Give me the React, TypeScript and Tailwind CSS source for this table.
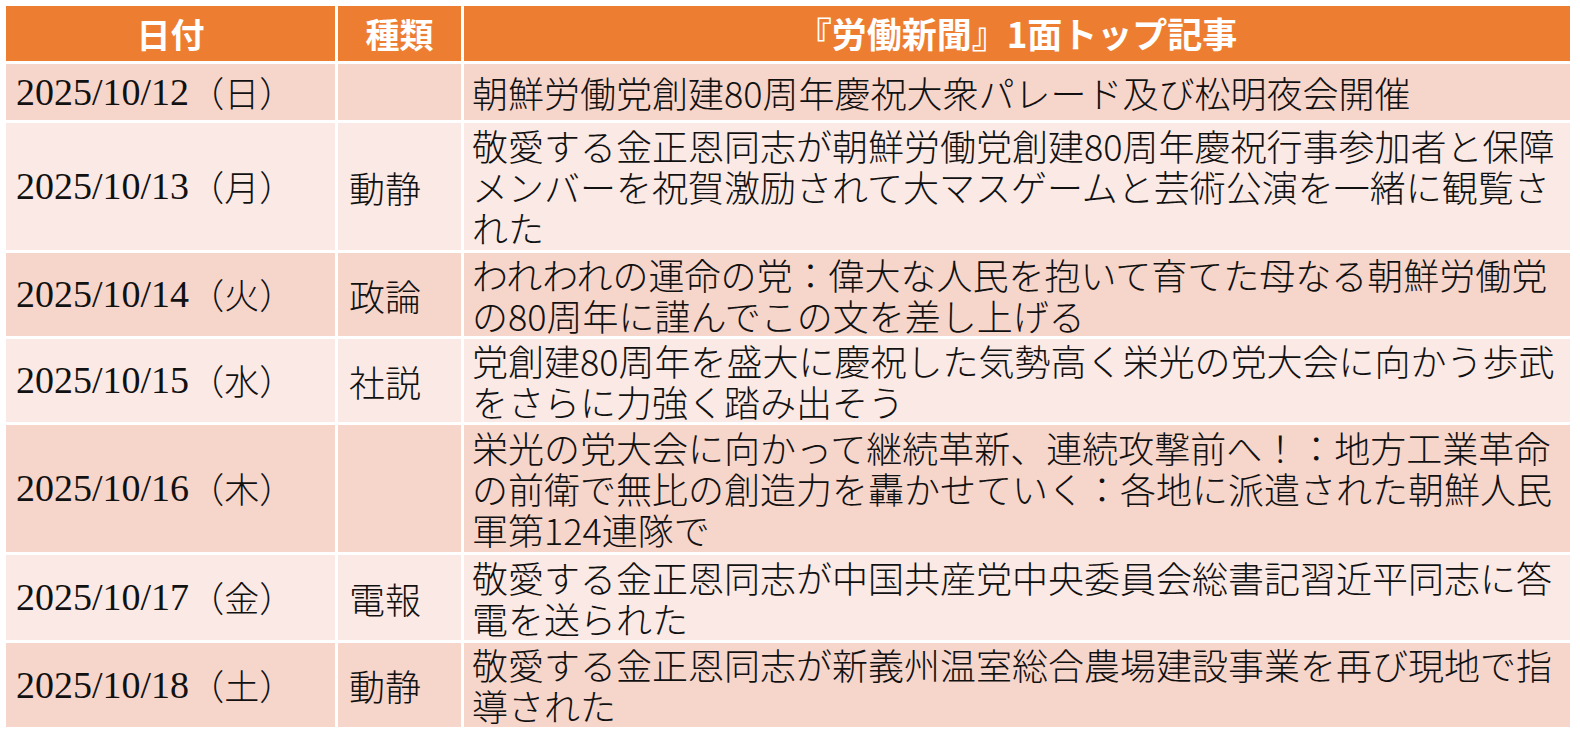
const rows = [
  {
    date: "2025/10/12",
    day: "（日）",
    kind: "",
    lines: ["朝鮮労働党創建80周年慶祝大衆パレード及び松明夜会開催"],
    dark: true,
  },
  {
    date: "2025/10/13",
    day: "（月）",
    kind: "動静",
    lines: [
      "敬愛する金正恩同志が朝鮮労働党創建80周年慶祝行事参加者と保障",
      "メンバーを祝賀激励されて大マスゲームと芸術公演を一緒に観覧さ",
      "れた",
    ],
    dark: false,
  },
  {
    date: "2025/10/14",
    day: "（火）",
    kind: "政論",
    lines: [
      "われわれの運命の党：偉大な人民を抱いて育てた母なる朝鮮労働党",
      "の80周年に謹んでこの文を差し上げる",
    ],
    dark: true,
  },
  {
    date: "2025/10/15",
    day: "（水）",
    kind: "社説",
    lines: [
      "党創建80周年を盛大に慶祝した気勢高く栄光の党大会に向かう歩武",
      "をさらに力強く踏み出そう",
    ],
    dark: false,
  },
  {
    date: "2025/10/16",
    day: "（木）",
    kind: "",
    lines: [
      "栄光の党大会に向かって継続革新、連続攻撃前へ！：地方工業革命",
      "の前衛で無比の創造力を轟かせていく：各地に派遣された朝鮮人民",
      "軍第124連隊で",
    ],
    dark: true,
  },
  {
    date: "2025/10/17",
    day: "（金）",
    kind: "電報",
    lines: [
      "敬愛する金正恩同志が中国共産党中央委員会総書記習近平同志に答",
      "電を送られた",
    ],
    dark: false,
  },
  {
    date: "2025/10/18",
    day: "（土）",
    kind: "動静",
    lines: [
      "敬愛する金正恩同志が新義州温室総合農場建設事業を再び現地で指",
      "導された",
    ],
    dark: true,
  },
];

export default function App() {
  return (
    <div className="w-[1580px] h-[739px] bg-white p-[6px] font-['Noto_Sans_CJK_JP',sans-serif] text-[#111]">
      <div className="grid grid-cols-[329px_123px_1106px] grid-rows-[55px_56px_127px_83px_83px_127px_85px_84px] gap-[3px]">
        {/* header */}
        <div className="bg-[#ED7D31] text-white font-bold text-[34px] flex items-center justify-center">
          日付
        </div>
        <div className="bg-[#ED7D31] text-white font-bold text-[34px] flex items-center justify-center">
          種類
        </div>
        <div className="bg-[#ED7D31] text-white font-bold text-[35px] flex items-center justify-center">
          『労働新聞』1面トップ記事
        </div>

        {rows.map((r) => {
          const bg = r.dark ? "bg-[#F6D5CB]" : "bg-[#FAE9E5]";
          return [
            <div
              key={r.date + "d"}
              className={`${bg} flex items-center pl-[10px] whitespace-nowrap`}
            >
              <span className="text-[38px] font-['Liberation_Serif',serif]">{r.date}</span>
              <span className="text-[35px] font-light">{r.day}</span>
            </div>,
            <div
              key={r.date + "k"}
              className={`${bg} flex items-center pl-[11px] text-[36px] font-light`}
            >
              {r.kind}
            </div>,
            <div
              key={r.date + "c"}
              className={`${bg} flex flex-col justify-center pl-[8px] text-[36px] font-light leading-[41px] whitespace-nowrap`}
            >
              {r.lines.map((l) => (
                <span key={l}>{l}</span>
              ))}
            </div>,
          ];
        })}
      </div>
    </div>
  );
}
